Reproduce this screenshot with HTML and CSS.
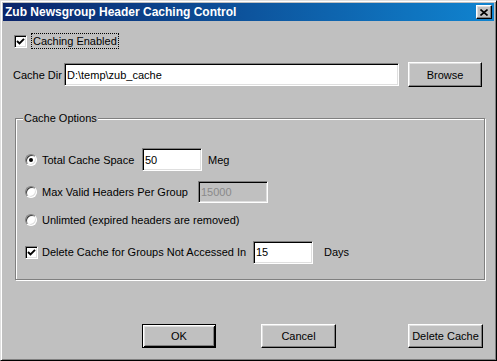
FILE: index.html
```html
<!DOCTYPE html>
<html lang="en">
<head>
  <meta charset="UTF-8">
  <meta name="viewport" content="width=device-width, initial-scale=1.0">
  <title>Zub Newsgroup Header Caching Control</title>
  <link rel="stylesheet" href="styles.css">
</head>
<body>
<div class="window">
  <div class="titlebar">
    <span class="title">Zub Newsgroup Header Caching Control</span>
    <span class="close-btn">
      <svg width="8" height="7" viewBox="0 0 8 7"><path d="M0.5 0.5 L7.5 6.5 M7.5 0.5 L0.5 6.5" stroke="#000" stroke-width="1.6" fill="none"/></svg>
    </span>
  </div>
  <div class="content">
    <div class="row-enable">
      <span class="check">
        <svg width="9" height="9" viewBox="0 0 9 9"><path d="M1 4 L3.5 6.5 L8 1.8" stroke="#000" stroke-width="1.9" fill="none"/></svg>
      </span>
      <span class="focus">Caching Enabled</span>
    </div>
    <div class="row-dir">
      <span class="dir-label">Cache Dir</span>
      <input class="field dir-field" type="text" value="D:\temp\zub_cache">
      <button class="btn browse">Browse</button>
    </div>
    <div class="group">
      <span class="group-title">Cache Options</span>
      <div class="opt opt-space">
        <span class="radio checked"></span>
        <span class="opt-label lbl-space">Total Cache Space</span>
        <input class="field num" type="text" value="50">
        <span class="unit">Meg</span>
      </div>
      <div class="opt opt-max">
        <span class="radio"></span>
        <span class="opt-label lbl-max">Max Valid Headers Per Group</span>
        <input class="field num wide" type="text" value="15000" disabled>
      </div>
      <div class="opt opt-unl">
        <span class="radio"></span>
        <span class="opt-label">Unlimted (expired headers are removed)</span>
      </div>
      <div class="opt opt-del">
        <span class="check">
          <svg width="9" height="9" viewBox="0 0 9 9"><path d="M1 4 L3.5 6.5 L8 1.8" stroke="#000" stroke-width="1.9" fill="none"/></svg>
        </span>
        <span class="opt-label lbl-del">Delete Cache for Groups Not Accessed In</span>
        <input class="field num" type="text" value="15">
        <span class="unit days">Days</span>
      </div>
    </div>
    <div class="actions">
      <button class="btn ok">OK</button>
      <button class="btn cancel">Cancel</button>
      <button class="btn delete">Delete Cache</button>
    </div>
  </div>
</div>
</body>
</html>
```

FILE: styles.css
```css
body {
  margin: 0;
  font-family: "Liberation Sans", Arial, sans-serif;
  font-size: 11px;
  color: #000;
  background: #c0c0c0;
}
.window {
  width: 497px;
  height: 361px;
  box-sizing: border-box;
  background: #c0c0c0;
  border: 1px solid;
  border-color: #dfdfdf #000 #000 #dfdfdf;
  box-shadow: inset 1px 1px #fff, inset -1px -1px #808080;
  padding: 2px;
}
.titlebar {
  height: 18px;
  display: flex;
  align-items: center;
  justify-content: space-between;
  padding: 0 2px;
  background: linear-gradient(to right, #0a246a, #1084d0);
  color: #fff;
}
.title {
  font-weight: bold;
  font-size: 12px;
}
.close-btn {
  width: 16px;
  height: 14px;
  box-sizing: border-box;
  background: #c0c0c0;
  border: 1px solid;
  border-color: #fff #000 #000 #fff;
  box-shadow: inset -1px -1px #808080, inset 1px 1px #dfdfdf;
  display: flex;
  align-items: center;
  justify-content: center;
}
.content {
  padding: 0 10px;
}
.row-enable {
  margin-top: 12px;
  height: 16px;
  display: flex;
  align-items: center;
}
.check {
  width: 13px;
  height: 13px;
  box-sizing: border-box;
  background: #fff;
  border: 1px solid;
  border-color: #808080 #fff #fff #808080;
  box-shadow: inset 1px 1px #000, inset -1px -1px #dfdfdf;
  display: flex;
  align-items: center;
  justify-content: center;
}
.row-enable .check {
  margin-left: 1px;
}
.focus {
  margin-left: 4px;
  border: 1px dotted #000;
  padding: 0 1px;
  line-height: 14px;
}
.row-dir {
  margin-top: 13px;
  height: 25px;
  display: flex;
  align-items: center;
}
.dir-label {
  width: 51px;
}
.field {
  box-sizing: border-box;
  height: 23px;
  border: 1px solid;
  border-color: #808080 #fff #fff #808080;
  box-shadow: inset 1px 1px #000, inset -1px -1px #dfdfdf;
  background: #fff;
  padding: 0 2px;
  margin: 0;
  font-family: "Liberation Sans", Arial, sans-serif;
  font-size: 11px;
  color: #000;
  outline: none;
}
.dir-field {
  width: 335px;
}
.btn {
  box-sizing: border-box;
  background: #c0c0c0;
  border: 1px solid;
  border-color: #fff #000 #000 #fff;
  box-shadow: inset -1px -1px #808080, inset 1px 1px #dfdfdf;
  padding: 0;
  margin: 0;
  font-family: "Liberation Sans", Arial, sans-serif;
  font-size: 11px;
  color: #000;
  height: 24px;
}
.browse {
  margin-left: 9px;
  width: 74px;
  height: 25px;
}
.group {
  position: relative;
  margin-top: 31px;
  margin-left: 2px;
  width: 470px;
  height: 162px;
  box-sizing: border-box;
  border: 1px solid #808080;
  box-shadow: inset 1px 1px #fff, 1px 1px #fff;
  padding-left: 9px;
  padding-top: 29px;
}
.group-title {
  position: absolute;
  top: -7px;
  left: 7px;
  padding: 0 1px;
  line-height: 13px;
  background: #c0c0c0;
}
.opt {
  display: flex;
  align-items: center;
}
.opt-space {
  height: 23px;
}
.opt-max {
  margin-top: 10px;
  height: 22px;
}
.opt-unl {
  margin-top: 10px;
  height: 14px;
}
.opt-del {
  margin-top: 14px;
  height: 22px;
}
.radio {
  position: relative;
  width: 12px;
  height: 12px;
  box-sizing: border-box;
  border-radius: 50%;
  background: #fff;
  border: 1px solid;
  border-color: #808080 #fff #fff #808080;
  box-shadow: inset 1px 1px #404040, inset -1px -1px #dfdfdf;
}
.radio.checked::after {
  content: "";
  position: absolute;
  left: 3px;
  top: 3px;
  width: 4px;
  height: 4px;
  border-radius: 50%;
  background: #000;
}
.opt-label {
  margin-left: 5px;
}
.opt-del .opt-label {
  margin-left: 4px;
}
.lbl-space {
  width: 100px;
}
.lbl-max {
  width: 156px;
}
.lbl-del {
  width: 211px;
}
.num {
  width: 60px;
}
.num.wide {
  width: 70px;
  height: 22px;
}
.field:disabled {
  background: #c0c0c0;
  color: #8a8a8a;
}
.unit {
  margin-left: 6px;
}
.unit.days {
  margin-left: 11px;
}
.actions {
  margin-top: 44px;
  display: flex;
}
.ok {
  margin-left: 129px;
  width: 74px;
  border-color: #000;
  box-shadow: inset 1px 1px #fff, inset -1px -1px #000, inset 2px 2px #dfdfdf, inset -2px -2px #808080;
}
.cancel {
  margin-left: 45px;
  width: 75px;
}
.delete {
  margin-left: 72px;
  width: 75px;
}
```
